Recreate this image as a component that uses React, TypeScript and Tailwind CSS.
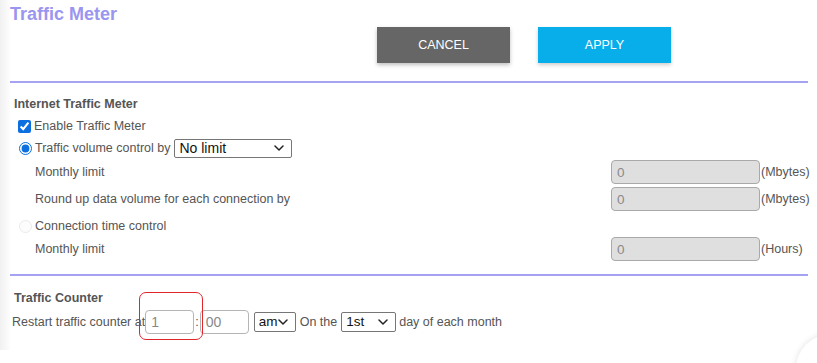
import React from "react";

const FONT = { fontFamily: '"Liberation Sans", Arial, sans-serif' };

function Field({ value, unit }: { value: string; unit: string }) {
  return (
    <div className="flex items-center shrink-0">
      <input
        readOnly
        disabled
        value={value}
        className="w-[149px] h-[24px] rounded-[4px] border border-[#a9a9a9] bg-[#dfdfdf] px-[5px] text-[13.5px] text-[#8a8a8a] outline-none"
      />
      <span className="ml-[1px] text-[12.5px] text-[#555] whitespace-nowrap">{unit}</span>
    </div>
  );
}

function LimitRow({ label, value, unit, className = "" }: { label: string; value: string; unit: string; className?: string }) {
  return (
    <div className={`flex items-center h-[24px] ${className}`}>
      <span className="w-[601px] shrink-0 pl-[25px] text-[12.5px] text-[#555]">{label}</span>
      <Field value={value} unit={unit} />
    </div>
  );
}

function Chevron() {
  return (
    <svg width="10" height="6" viewBox="0 0 10 6" className="shrink-0">
      <path d="M1 1l4 4 4-4" fill="none" stroke="#222" strokeWidth="1.5" strokeLinecap="round" strokeLinejoin="round" />
    </svg>
  );
}

function FakeSelect({ text, w, h = 19, size = 14 }: { text: string; w: number; h?: number; size?: number }) {
  return (
    <div
      className="flex items-center justify-between border border-[#767676] rounded-[2px] bg-white pl-[4px] pr-[7px] text-[#111]"
      style={{ width: w, height: h, fontSize: size }}
    >
      <span>{text}</span>
      <Chevron />
    </div>
  );
}

export default function App() {
  return (
    <div className="relative w-[817px] h-[363px] bg-white overflow-hidden" style={FONT}>
      <div className="flex h-[350px]">
        <div className="w-[10px] shrink-0 bg-gradient-to-r from-[#f1f1f1] to-[#fdfdfd]" />
        <div className="flex-1 min-w-0 pr-[9px]">
          {/* header */}
          <div className="h-[83px] border-b-2 border-[#a5a2f2]">
            <h1 className="pt-[3px] text-[18px] leading-[22px] font-bold text-[#9a96ef]">Traffic Meter</h1>
            <div className="flex gap-[28px] pl-[367px] pt-[2px]">
              <button className="w-[133px] h-[36px] bg-[#666] text-white text-[12.5px] shadow-[0_2px_4px_rgba(0,0,0,0.25)]">
                CANCEL
              </button>
              <button className="w-[133px] h-[36px] bg-[#08aeea] text-white text-[12.5px] shadow-[0_2px_4px_rgba(0,0,0,0.2)]">
                APPLY
              </button>
            </div>
          </div>

          {/* internet traffic meter */}
          <div className="h-[193px] pt-[12px] border-b-2 border-[#a5a2f2] text-[12.5px] text-[#555]">
            <div className="h-[18px] flex items-center pl-[4px] font-bold">Internet Traffic Meter</div>
            <div className="mt-[4px] h-[18px] flex items-center pl-[8px]">
              <input type="checkbox" defaultChecked className="m-0 w-[13px] h-[13px] accent-[#0b6fe0]" />
              <span className="ml-[3px]">Enable Traffic Meter</span>
            </div>
            <div className="mt-[4px] h-[18px] flex items-center pl-[9px]">
              <input type="radio" defaultChecked name="ctl" className="m-0 w-[13px] h-[13px] accent-[#0b6fe0]" />
              <span className="ml-[3px] mr-[4px]">Traffic volume control by</span>
              <FakeSelect text="No limit" w={118} />
            </div>
            <LimitRow className="mt-[3px]" label="Monthly limit" value="0" unit="(Mbytes)" />
            <LimitRow className="mt-[3px]" label="Round up data volume for each connection by" value="0" unit="(Mbytes)" />
            <div className="mt-[6px] h-[18px] flex items-center pl-[9px] text-[#555]">
              <input type="radio" disabled name="ctl" className="m-0 w-[13px] h-[13px] opacity-40" />
              <span className="ml-[3px]">Connection time control</span>
            </div>
            <LimitRow className="mt-[2px]" label="Monthly limit" value="0" unit="(Hours)" />
          </div>

          {/* traffic counter */}
          <div className="pt-[13px] text-[12.5px] text-[#555]">
            <div className="h-[18px] flex items-center pl-[4px] font-bold">Traffic Counter</div>
            <div className="mt-[3px] h-[24px] flex items-center pl-[2px]">
              <span>Restart traffic counter at</span>
              <input
                readOnly
                value="1"
                className="w-[49px] h-[24px] rounded-[4px] border border-[#b5b5b5] px-[5px] text-[14px] text-[#888] outline-none"
              />
              <span className="mx-[1px]">:</span>
              <input
                readOnly
                value="00"
                className="w-[49px] h-[24px] rounded-[4px] border border-[#b5b5b5] px-[5px] text-[14px] text-[#888] outline-none"
              />
              <div className="ml-[5px] mr-[4px]">
                <FakeSelect text="am" w={42} h={20} size={13.5} />
              </div>
              <span>On the</span>
              <div className="ml-[4px] mr-[3px]">
                <FakeSelect text="1st" w={55} h={20} size={13.5} />
              </div>
              <span>day of each month</span>
            </div>
          </div>
        </div>
      </div>

      {/* annotation */}
      <div className="absolute left-[139px] top-[292px] w-[64px] h-[48px] rounded-[7px] border-[1.5px] border-[#e0262b]" />
      {/* corner of floating widget */}
      <div className="absolute left-[796px] top-[334px] w-[70px] h-[70px] rounded-full bg-white shadow-[0_0_6px_rgba(0,0,0,0.12)]" />
    </div>
  );
}
